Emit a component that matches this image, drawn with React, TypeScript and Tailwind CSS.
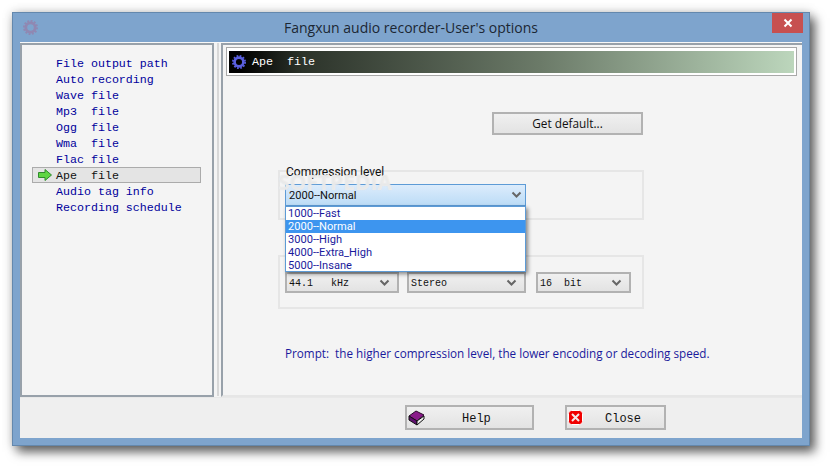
const mono = "font-['Liberation_Mono',monospace]";
const ui = "font-['Open_Sans','Noto_Sans',sans-serif]";
const seg = "font-['Roboto','Open_Sans',sans-serif]";

const navItems = [
  'File output path',
  'Auto recording',
  'Wave file',
  'Mp3  file',
  'Ogg  file',
  'Wma  file',
  'Flac file',
  'Ape  file',
  'Audio tag info',
  'Recording schedule',
];

const levels = ['1000--Fast', '2000--Normal', '3000--High', '4000--Extra_High', '5000--Insane'];

function Chevron() {
  return (
    <svg width="11" height="8" viewBox="0 0 11 8" className="shrink-0">
      <path d="M1.5 1.5 L5.5 5.5 L9.5 1.5" fill="none" stroke="#666" strokeWidth="2" />
    </svg>
  );
}

function Gear({ color, size }: { color: string; size: number }) {
  return (
    <svg width={size} height={size} viewBox="0 0 16 16">
      <circle cx="8" cy="8" r="5" fill="none" stroke={color} strokeWidth="3" />
      <circle cx="8" cy="8" r="7" fill="none" stroke={color} strokeWidth="2" strokeDasharray="2 1.66" />
    </svg>
  );
}

function Combo({ label, className }: { label: string; className: string }) {
  return (
    <div className={`h-[21px] flex items-center justify-between pl-[2px] pr-[7px] border-2 border-[#b2b2b2] bg-gradient-to-b from-[#f0f0f0] to-[#e3e3e3] ${className}`}>
      <span className={`${mono} text-[10px] text-[#111] whitespace-pre pt-[2px]`}>{label}</span>
      <Chevron />
    </div>
  );
}

export default function App() {
  return (
    <div className="w-[830px] h-[466px] bg-white pt-3 pl-3 overflow-hidden">
      <div className="w-[798px] h-[434px] flex flex-col border border-[#6488ad] bg-[#7ea4cd] shadow-[5px_6px_10px_rgba(0,0,0,0.6),0_0_10px_rgba(0,0,0,0.18)]">
        {/* Title bar */}
        <div className="relative h-[29px] shrink-0 flex items-center justify-center">
          <div className="absolute left-[10px] top-[7px]">
            <Gear color="#9088b2" size={15} />
          </div>
          <span className={`${ui} text-[14px] text-[#1c2733]`}>Fangxun audio recorder-User's options</span>
          <div className="absolute right-[6px] top-0 w-[31px] h-[20px] bg-[#c75050] flex items-center justify-center">
            <svg width="10" height="10" viewBox="0 0 10 10">
              <path d="M1.5 1.5 L8.5 8.5 M8.5 1.5 L1.5 8.5" stroke="#fff" strokeWidth="2" />
            </svg>
          </div>
        </div>

        {/* Client area */}
        <div className="flex-1 mx-[7px] mb-[7px] flex flex-col bg-[#efefef] border-t border-[#f8f8f8]">
          <div className="h-[354px] flex shrink-0">
            {/* Left tree */}
            <div className="w-[194px] bg-[#f4f4f4] border-2 border-[#98a1aa] pt-[10px] pl-[10px]">
              {navItems.map((item, i) => {
                const active = i === 7;
                return (
                  <div
                    key={item}
                    className={`h-4 w-[169px] flex items-center ${active ? 'border border-[#ababab] bg-[#e4e4e4]' : 'pl-[1px]'}`}
                  >
                    <div className="w-[23px] shrink-0 flex justify-center">
                      {active && (
                        <svg width="14" height="12" viewBox="0 0 14 12">
                          <path d="M0.5 3.5 H7 V0.5 L13.5 6 L7 11.5 V8.5 H0.5 Z" fill="#5fd642" stroke="#2f8a2c" />
                        </svg>
                      )}
                    </div>
                    <span className={`${mono} text-[11.65px] whitespace-pre pt-[2px] ${active ? 'text-[#111]' : 'text-[#00009c]'}`}>{item}</span>
                  </div>
                );
              })}
            </div>

            {/* Splitter */}
            <div className="w-[7px] flex justify-center bg-[#f4f4f4] pb-[1px]">
              <div className="w-[2px] bg-[#d8d8d8]" />
            </div>

            {/* Right panel */}
            <div className="relative flex-1 bg-[#f4f4f4] border-l-2 border-t-2 border-[#98a1aa] border-b-2 border-b-[#e6e6e6] border-r-0 pt-[2px] pr-[5px] pl-[3px]">
              <div className="h-[29px] border border-[#a8a8a8] pt-[3px] pb-[2px] px-[2px] bg-white">
                <div className="h-full flex items-center pl-[3px] bg-[linear-gradient(to_right,#000_2%,#2c332a_13%,#6b7a68_55%,#bcd6bc_100%)]">
                  <Gear color="#5a5fe0" size={14} />
                  <span className={`${mono} text-[11.7px] text-white whitespace-pre ml-[6px] pt-[2px]`}>Ape  file</span>
                </div>
              </div>

              <div className="flex justify-end pr-[154px] mt-[36px]">
                <div className={`w-[151px] h-[23px] border-2 border-[#b2b2b2] bg-gradient-to-b from-[#f0f0f0] to-[#e3e3e3] flex items-center justify-center ${ui} text-[11.8px] text-[#111]`}>
                  Get default...
                </div>
              </div>

              {/* Compression level group */}
              <div className="relative ml-[52px] mt-[35px] w-[366px] h-[50px] border-2 border-[#e6e6e6] pl-[5px] pt-[12px]">
                <span className={`absolute left-[6px] top-[-9px] ${seg} text-[12px] text-[#111]`}>Compression level</span>
                <div className="relative w-[241px] h-[22px] border border-[#5d9bd6] bg-gradient-to-b from-[#dcecfc] to-[#bcdcf6] flex items-center justify-between pl-[3px] pr-[3px]">
                  <span className={`${seg} text-[11.1px] text-[#111] pt-[2px]`}>2000--Normal</span>
                  <Chevron />
                </div>
              </div>

              {/* Format group */}
              <div className="ml-[52px] mt-[35px] w-[366px] h-[54px] border-2 border-[#e6e6e6] pl-[5px] pt-[15px] flex items-start">
                <Combo label="44.1   kHz" className="w-[114px]" />
                <Combo label="Stereo" className="w-[119px] ml-2" />
                <Combo label="16  bit" className="w-[95px] ml-[10px]" />
              </div>

              <p className={`ml-[59px] mt-[36px] ${ui} text-[11.7px] text-[#1a1a9c] whitespace-pre`}>
                Prompt:  the higher compression level, the lower encoding or decoding speed.
              </p>

              {/* Watermark */}
              <div className={`absolute left-[55px] top-[122px] pointer-events-none ${ui} text-[21px] font-bold text-white/40 [text-shadow:0_0_1px_#ddd]`}>
                SOFTPEDIA
              </div>

              {/* Open dropdown list */}
              <div className="absolute left-[62px] top-[161px] w-[241px] h-[66px] bg-white border border-[#5d9bd6] shadow-[2px_2px_4px_rgba(0,0,0,0.45)]">
                {levels.map((level, i) => (
                  <div
                    key={level}
                    className={`h-[13px] flex items-center pl-[2px] pt-[1px] ${seg} text-[11.1px] ${i === 1 ? 'bg-[#3d95ef] text-white' : 'text-[#1a1a9c]'}`}
                  >
                    {level}
                  </div>
                ))}
              </div>
            </div>
          </div>

          {/* Bottom buttons */}
          <div className="flex-1 flex items-start pt-[7px] pl-[385px] border-t border-[#e8e8e8]">
            <div className="w-[129px] h-[25px] border-2 border-[#b2b2b2] bg-gradient-to-b from-[#f0f0f0] to-[#e3e3e3] flex items-center pl-[1px]">
              <svg width="17" height="16" viewBox="0 0 17 16" className="shrink-0">
                <path d="M1 6 L8 1 L16 5 L9 11 Z" fill="#8a1a8a" stroke="#2a0a2a" />
                <path d="M1 6 L1 10 L9 15 L9 11 Z" fill="#5f0f6f" stroke="#111" />
                <path d="M9 11 L16 6 L16 9 L9 15 Z" fill="#eee" stroke="#111" />
              </svg>
              <span className={`${mono} text-[12px] text-[#111] ml-[37px] pt-[2px]`}>Help</span>
            </div>
            <div className="w-[101px] h-[25px] ml-[31px] border-2 border-[#b2b2b2] bg-gradient-to-b from-[#f0f0f0] to-[#e3e3e3] flex items-center pl-[1px]">
              <svg width="15" height="15" viewBox="0 0 15 15" className="shrink-0">
                <rect x="0.5" y="0.5" width="14" height="14" rx="3" fill="#f00000" stroke="#fff" />
                <path d="M4 4 L11 11 M11 4 L4 11" stroke="#f4e8e8" strokeWidth="2" />
              </svg>
              <span className={`${mono} text-[12px] text-[#111] ml-[22px] pt-[2px]`}>Close</span>
            </div>
          </div>
        </div>
      </div>
    </div>
  );
}
